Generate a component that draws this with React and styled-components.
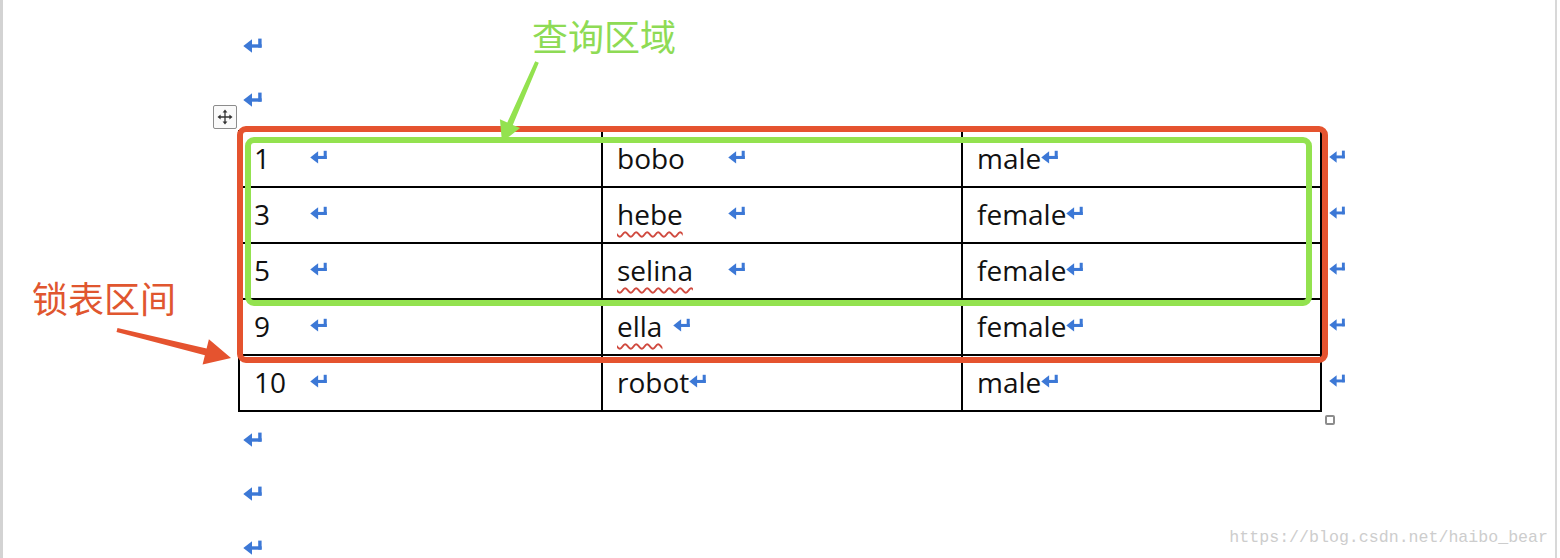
import React from 'react';
import styled, { createGlobalStyle } from 'styled-components';

const GlobalStyle = createGlobalStyle`
  html, body { margin: 0; padding: 0; background: #fff; }
  body { font-family: "Open Sans", "Noto Sans CJK SC", sans-serif; }
`;

const RED = '#e5532f';
const GREEN = '#93e24f';

const rows = [
  [{ text: '1', tab: 56 }, { text: 'bobo', tab: 111 }, { text: 'male' }],
  [{ text: '3', tab: 56 }, { text: 'hebe', tab: 111, typo: true }, { text: 'female' }],
  [{ text: '5', tab: 56 }, { text: 'selina', tab: 111, typo: true }, { text: 'female' }],
  [{ text: '9', tab: 56 }, { text: 'ella', tab: 56, typo: true }, { text: 'female' }],
  [{ text: '10', tab: 56 }, { text: 'robot' }, { text: 'male' }],
];

const colWidths = [363, 360, 361];

const ReturnMark = ({ w = 18, h = 14 }) => (
  <svg width={w} height={h} viewBox="0 0 20 15">
    <rect x="15.2" y="0.6" width="3.4" height="9" fill="#3c78d6" />
    <rect x="7" y="6.3" width="11.6" height="3.4" fill="#3c78d6" />
    <polygon points="0.3,8 9,1.2 9,14.8" fill="#3c78d6" />
  </svg>
);

const arrowPoints = (from, to, tailW, shaftW, headL, headW) => {
  const [x1, y1] = from;
  const [x2, y2] = to;
  const len = Math.hypot(x2 - x1, y2 - y1);
  const ux = (x2 - x1) / len;
  const uy = (y2 - y1) / len;
  const px = -uy;
  const py = ux;
  const bx = x2 - ux * headL;
  const by = y2 - uy * headL;
  const p = (x, y, s) => `${(x + px * s).toFixed(1)},${(y + py * s).toFixed(1)}`;
  return [
    p(x1, y1, tailW / 2),
    p(bx, by, shaftW / 2),
    p(bx, by, headW / 2),
    `${x2},${y2}`,
    p(bx, by, -headW / 2),
    p(bx, by, -shaftW / 2),
    p(x1, y1, -tailW / 2),
  ].join(' ');
};

export default function App() {
  return (
    <>
      <GlobalStyle />
      <Page>
        <Doc>
          <Para><ReturnMark w={20} h={15} /></Para>
          <Para><ReturnMark w={20} h={15} /></Para>
          <Table>
            <MoveHandle>
              <svg width="16" height="16" viewBox="0 0 16 16">
                <path d="M8 2v12M2 8h12" stroke="#333" strokeWidth="1.3" />
                <polygon points="8,0.5 5.6,3.6 10.4,3.6" fill="#333" />
                <polygon points="8,15.5 5.6,12.4 10.4,12.4" fill="#333" />
                <polygon points="0.5,8 3.6,5.6 3.6,10.4" fill="#333" />
                <polygon points="15.5,8 12.4,5.6 12.4,10.4" fill="#333" />
              </svg>
            </MoveHandle>
            {rows.map((row, ri) => (
              <TableRow key={ri}>
                {row.map((cell, ci) => (
                  <Cell key={ci} $w={colWidths[ci]} $last={ci === row.length - 1} $bottom={ri === rows.length - 1}>
                    <CellText $tab={cell.tab} $typo={cell.typo}>{cell.text}</CellText>
                    <ReturnMark w={18} h={14} />
                  </Cell>
                ))}
                <EndMark><ReturnMark w={17} h={13} /></EndMark>
              </TableRow>
            ))}
            <ResizeHandle />
          </Table>
          <Para><ReturnMark w={20} h={15} /></Para>
          <Para><ReturnMark w={20} h={15} /></Para>
          <Para><ReturnMark w={20} h={15} /></Para>
        </Doc>

        <Highlight $color={RED} $top={126} $left={237} $width={1091} $height={237} />
        <Highlight $color={GREEN} $top={137} $left={245} $width={1067} $height={169} />

        <Arrows width="1560" height="558">
          <polygon points={arrowPoints([537, 62], [502, 142], 4, 6, 20, 22)} fill={GREEN} />
          <polygon points={arrowPoints([117, 330], [231, 358], 4, 7, 26, 26)} fill={RED} />
        </Arrows>

        <Label $color="#8edb55" $top={15} $left={532}>查询区域</Label>
        <Label $color="#e0562f" $top={277} $left={32}>锁表区间</Label>

        <Watermark>https://blog.csdn.net/haibo_bear</Watermark>
      </Page>
    </>
  );
}

const Page = styled.div`
  position: relative;
  width: 1557px;
  height: 558px;
  box-sizing: border-box;
  border-left: 3px solid #d3d3d3;
  border-right: 2px solid #d8d8d8;
  overflow: hidden;
  background: #fff;
`;

const Doc = styled.div`
  display: flex;
  flex-direction: column;
  align-items: flex-start;
  margin-left: 235px;
  padding-top: 18px;
`;

const Para = styled.div`
  display: flex;
  align-items: center;
  height: 54px;
  padding-left: 5px;
  flex-shrink: 0;
`;

const Table = styled.div`
  position: relative;
  display: flex;
  flex-direction: column;
  margin-top: 4px;
`;

const TableRow = styled.div`
  display: flex;
  align-items: stretch;
`;

const Cell = styled.div`
  box-sizing: border-box;
  width: ${p => p.$w}px;
  height: ${p => (p.$bottom ? 58 : 56)}px;
  display: flex;
  align-items: center;
  align-self: flex-start;
  padding: 0 0 0 14px;
  border-left: 2px solid #000;
  border-top: 2px solid #000;
  border-right: ${p => (p.$last ? '2px solid #000' : 'none')};
  border-bottom: ${p => (p.$bottom ? '2px solid #000' : 'none')};
  svg { margin-top: -5px; }
`;

const CellText = styled.span`
  display: inline-block;
  min-width: ${p => p.$tab || 0}px;
  font-family: "Open Sans", sans-serif;
  font-size: 28px;
  line-height: 38px;
  color: #111;
  margin-top: -2px;
  ${p => p.$typo && `
    text-decoration-line: underline;
    text-decoration-style: wavy;
    text-decoration-color: #d04a3f;
    text-decoration-thickness: 1.5px;
    text-underline-offset: 6px;
    text-decoration-skip-ink: none;
  `}
`;

const EndMark = styled.div`
  display: flex;
  align-items: center;
  height: 52px;
  padding-left: 7px;
`;

const MoveHandle = styled.div`
  position: absolute;
  top: -25px;
  left: -25px;
  width: 24px;
  height: 24px;
  box-sizing: border-box;
  border: 1.5px solid #8c8c8c;
  border-radius: 2px;
  background: #fafafa;
  display: flex;
  align-items: center;
  justify-content: center;
`;

const ResizeHandle = styled.div`
  position: absolute;
  left: 1087px;
  top: 285px;
  width: 10px;
  height: 10px;
  box-sizing: border-box;
  border: 2px solid #8c8c8c;
  border-radius: 2px;
  background: #fff;
`;

const Highlight = styled.div`
  position: absolute;
  top: ${p => p.$top}px;
  left: ${p => p.$left - 3}px;
  width: ${p => p.$width}px;
  height: ${p => p.$height}px;
  box-sizing: border-box;
  border: 6px solid ${p => p.$color};
  border-radius: 9px;
  pointer-events: none;
`;

const Arrows = styled.svg`
  position: absolute;
  top: 0;
  left: -3px;
  pointer-events: none;
`;

const Label = styled.div`
  position: absolute;
  top: ${p => p.$top}px;
  left: ${p => p.$left - 3}px;
  font-family: "Noto Sans CJK SC", sans-serif;
  font-size: 36px;
  line-height: 40px;
  color: ${p => p.$color};
  white-space: nowrap;
`;

const Watermark = styled.div`
  position: absolute;
  right: 7px;
  bottom: 10px;
  font-family: "Liberation Mono", monospace;
  font-size: 16.6px;
  line-height: 20px;
  color: #cdcdcd;
  white-space: nowrap;
`;
